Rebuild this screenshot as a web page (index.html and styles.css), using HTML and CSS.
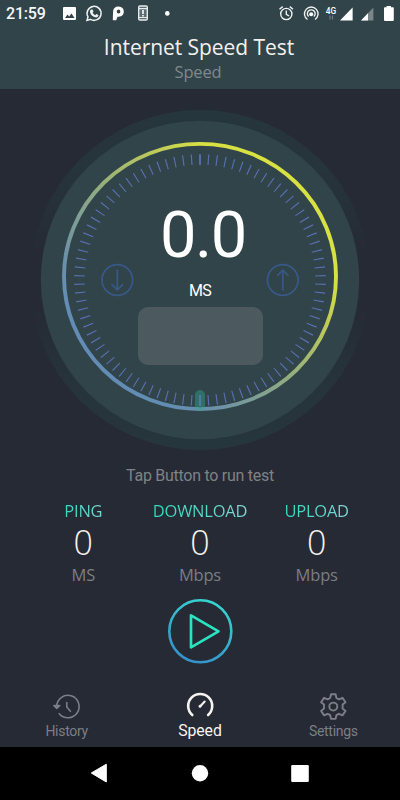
FILE: index.html
```html
<!DOCTYPE html>
<html lang="en">
<head>
<meta charset="UTF-8">
<meta name="viewport" content="width=device-width, initial-scale=1.0">
<title>Internet Speed Test</title>
<link rel="stylesheet" href="styles.css">
</head>
<body>
<div class="screen">
    <header class="header">
        <!-- Status bar -->
        <div class="status">
            <span class="time">21:59</span>
            <svg class="status-left" width="110" height="20" viewBox="61 4 110 20">
                <path fill="#fff" fill-rule="evenodd" d="M64 7h11q1 0 1 1v11q0 1-1 1H64q-1 0-1-1V8q0-1 1-1zM65 18h9.500l-3-4.500-2.400 3-1.600-2z"/>
                <path fill="none" stroke="#eef1f2" stroke-width="1.500" d="M87 20.500l1-3.700a7 7 0 1 1 2.600 2.600z"/>
                <path fill="#eef1f2" d="M91.300 9.500h1.300l.9 2-.9 1.200q1 1.800 2.700 2.600l1-1.200 2.200 1q0 2.400-2.400 2.400-5.400-.8-6.300-6.200.4-1.200 1.500-1.800z"/>
                <path fill="#fff" fill-rule="evenodd" d="M113 12q.3-5.500 5.500-5.500 5.300.3 5.300 5.300-.2 4.600-5 4.900h-1.300l-1.300 3.500h-3.400zM118.600 9.600q-1.900.2-1.900 2.100.2 1.700 1.800 1.700 1.900-.2 1.900-2-.2-1.700-1.800-1.800z"/>
                <rect x="138.700" y="6" width="8.600" height="14" rx="1.200" fill="#5d6c70" stroke="#e6eaeb" stroke-width="1.400"/>
                <path stroke="#e6eaeb" stroke-width="1.200" d="M138.500 8.600h9M138.500 17.500h9"/>
                <path stroke="#fff" stroke-width="1.600" d="M143 10v4M143 15v1.500"/>
                <circle cx="167.300" cy="13.400" r="2.300" fill="#fff"/>
            </svg>
            <svg class="status-right" width="120" height="20" viewBox="277 4 120 20">
                <g fill="none" stroke="#eef1f2" stroke-width="1.400">
                    <circle cx="286.300" cy="14" r="5.600"/>
                    <path d="M286.300 10.500v3.800l2.800 1.700M279.500 9.300l3.200-2.700M293 9.300l-3.200-2.700"/>
                    <path d="M307.500 19.500a6.800 6.800 0 1 1 7.500 0M308.600 16.600a3.900 3.900 0 1 1 5.300 0"/>
                </g>
                <circle cx="311.200" cy="14.300" r="2" fill="#fff"/>
                <text class="net" x="325.800" y="14" textLength="10.400" lengthAdjust="spacingAndGlyphs">4G</text>
                <path stroke="#71797d" stroke-width="1.200" d="M330 15.500v4M332.500 15.500v4"/>
                <path fill="#fff" d="M352.600 7.500V20.500H340z"/>
                <path fill="#7b8589" d="M373.400 7.500V20.500H361z"/>
                <path fill="#fff" d="M368 13.200v7.300h-7z"/>
                <path fill="#fff" d="M386.500 6h4.500v1.300h2q.8 0 .8.800v12q0 .8-.8.800h-8.200q-.8 0-.8-.8v-12q0-.8.8-.8h1.700z"/>
            </svg>
        </div>
        <h1>Internet Speed Test</h1>
        <p class="sub">Speed</p>
    </header>

    <!-- Gauge -->
    <div class="gauge">
        <svg class="dial" width="344" height="344" viewBox="28 108 344 344">
            <defs>
                <linearGradient id="halo" x1="0" y1="0" x2="0" y2="1">
                    <stop offset="0" stop-color="#26363d"/>
                    <stop offset=".22" stop-color="#26333b"/>
                    <stop offset=".42" stop-color="#262a35"/>
                    <stop offset=".58" stop-color="#262a35"/>
                    <stop offset=".78" stop-color="#26333b"/>
                    <stop offset="1" stop-color="#26363d"/>
                </linearGradient>
                <linearGradient id="ring" gradientUnits="userSpaceOnUse" x1="110" y1="350" x2="260" y2="200">
                    <stop offset="0" stop-color="#628cb3"/>
                    <stop offset=".16" stop-color="#6c91a8"/>
                    <stop offset=".5" stop-color="#91ac80"/>
                    <stop offset=".82" stop-color="#bfcc58"/>
                    <stop offset="1" stop-color="#d8e142"/>
                </linearGradient>
            </defs>
            <circle cx="200" cy="280" r="170" fill="url(#halo)"/>
            <circle cx="200" cy="280" r="159.200" fill="#31444a"/>
            <ellipse cx="200" cy="276.500" rx="136" ry="132.600" fill="none" stroke="url(#ring)" stroke-width="3.900"/>
            <!-- one tick every 4 degrees -->
            <circle cx="200" cy="280" r="120.500" fill="none" stroke="#5870b2" stroke-width="10.600" pathLength="360" stroke-dasharray=".54 3.460" stroke-dashoffset=".27" transform="rotate(-90 200 280)"/>
            <rect x="195" y="390" width="10" height="21" rx="5" fill="#30a68c" fill-opacity=".45"/>
            <path stroke="#5579b4" stroke-width="1.500" d="M200 395v11"/>
            <path stroke="#5870b2" stroke-width="1.500" d="M200 154.500v10.500"/>
            <g fill="none" stroke="#385987" stroke-width="1.700" stroke-linecap="round" stroke-linejoin="round">
                <circle cx="117.300" cy="280" r="15.300"/>
                <path d="M117.300 270v19.500M112 284.700l5.300 5.300 5.300-5.300"/>
                <circle cx="282.800" cy="280" r="15.300"/>
                <path d="M282.800 290v-19.500M277.500 275.500l5.300-5.300 5.300 5.300"/>
            </g>
        </svg>
        <div class="reading">
            <span class="value">0.0</span>
            <span class="unit">MS</span>
            <div class="panel"></div>
        </div>
    </div>

    <p class="hint">Tap Button to run test</p>

    <!-- Results -->
    <div class="results">
        <div class="result">
            <span class="name">PING</span>
            <span class="num">0</span>
            <span class="measure">MS</span>
        </div>
        <div class="result">
            <span class="name">DOWNLOAD</span>
            <span class="num">0</span>
            <span class="measure">Mbps</span>
        </div>
        <div class="result">
            <span class="name">UPLOAD</span>
            <span class="num">0</span>
            <span class="measure">Mbps</span>
        </div>
    </div>

    <button class="play" aria-label="Start">
        <svg width="66" height="66" viewBox="167 598 66 66">
            <defs>
                <linearGradient id="play" x1="0.300" y1="1" x2="0.700" y2="0">
                    <stop offset="0" stop-color="#3492ca"/>
                    <stop offset=".3" stop-color="#36a2cc"/>
                    <stop offset="1" stop-color="#36d6cf"/>
                </linearGradient>
            </defs>
            <circle cx="200.300" cy="631.300" r="31" fill="none" stroke="url(#play)" stroke-width="2.600"/>
            <path d="M191 615.300v32l27.500-16z" fill="none" stroke="#2ae3c0" stroke-width="2.700" stroke-linejoin="round"/>
        </svg>
    </button>

    <!-- Tabs -->
    <nav class="tabs">
        <a class="tab">
            <svg width="30" height="30" viewBox="52.600 692 30 30" fill="none" stroke="#7b7e86" stroke-width="1.600" stroke-linecap="round" stroke-linejoin="round">
                <path d="M57.300 706.500a11.200 11.200 0 1 1 2.600 7.200"/>
                <path d="M67.400 702.500v4.500l3.600 4.200"/>
                <path d="M54.500 705.600h5.800l-2.900 2.800z" fill="#7b7e86"/>
            </svg>
            <span>History</span>
        </a>
        <a class="tab active">
            <svg width="30" height="30" viewBox="185 692 30 30" fill="none" stroke="#f6f4f0" stroke-width="2.600" stroke-linecap="round">
                <path d="M192.300 715a12 12 0 1 1 15.800 0"/>
                <path d="M200.500 706l4.200-4.500" stroke-width="2"/>
                <circle cx="200" cy="706.300" r=".8" stroke-width="1.400"/>
            </svg>
            <span>Speed</span>
        </a>
        <a class="tab">
            <svg width="30" height="30" viewBox="318 692 30 30" fill="none" stroke="#7b7e86" stroke-width="1.900" stroke-linejoin="round">
                <circle cx="333.300" cy="706.600" r="4"/>
                <path d="M331 694.300h4.600l.8 3.700 2.500 1.400 3.600-1.600 3 4.500-2.900 2.300v4l2.900 2.300-3 4.500-3.600-1.600-2.500 1.400-.8 3.700H331l-.8-3.700-2.500-1.400-3.600 1.600-3-4.500 2.900-2.300v-4l-2.900-2.300 3-4.500 3.600 1.600 2.500-1.400z"/>
            </svg>
            <span>Settings</span>
        </a>
    </nav>

    <!-- System navigation -->
    <div class="sysnav">
        <svg width="220" height="22" viewBox="90 762 220 22" fill="#fff">
            <path d="M91.300 773l15-8.800v17.800z" stroke="#fff" stroke-linejoin="round"/>
            <circle cx="200" cy="773.300" r="8.200"/>
            <rect x="291.200" y="765" width="17.600" height="17" rx="1.200"/>
        </svg>
    </div>
</div>
</body>
</html>
```
FILE: styles.css
```css
* {box-sizing:border-box;}
body {margin:0;background:#262a35;font-family:Roboto,"Liberation Sans",sans-serif;color:#fff;}
h1,p {margin:0;font-weight:400;}
svg {display:block;}
.screen {width:400px;height:800px;display:flex;flex-direction:column;align-items:center;overflow:hidden;}
.header {width:100%;height:89px;background:#31444a;text-align:center;}
.status {height:28px;padding:0 3px 0 6px;display:flex;align-items:center;}
.time {width:55px;text-align:left;font-size:16px;font-weight:500;line-height:28px;letter-spacing:-.2px;color:#f6f8f8;}
.status-right {margin-left:auto;}
.net {font-size:9px;font-weight:500;fill:#fff;}
h1 {font-family:"Open Sans","Noto Sans",sans-serif;font-size:21px;line-height:28px;letter-spacing:-.05px;margin-top:5px;padding-right:2px;color:#f3f1ee;}
.sub {font-family:"Open Sans","Noto Sans",sans-serif;font-size:16.500px;line-height:22px;letter-spacing:-.2px;padding-right:4px;color:#7f898d;}
.gauge {display:grid;justify-items:center;margin-top:19px;width:344px;height:344px;}
.dial,.reading {grid-area:1/1;}
.reading {display:flex;flex-direction:column;align-items:center;padding-top:89px;}
.value {font-size:65px;line-height:76px;letter-spacing:-1.400px;margin-left:6px;}
.unit {font-size:16px;line-height:20px;margin-top:8px;letter-spacing:-.8px;}
.panel {width:125px;height:58px;margin-top:6px;border-radius:10px;background:#4c5a60;}
.hint {font-size:16px;line-height:22px;letter-spacing:-.27px;margin-top:13px;color:#7f8286;}
.results {width:350px;display:grid;grid-template-columns:repeat(3,1fr);margin-top:13px;font-family:"Open Sans","Noto Sans",sans-serif;}
.result {display:flex;flex-direction:column;align-items:center;}
.name {font-size:16.500px;line-height:22px;letter-spacing:-.25px;background:linear-gradient(90deg,#32d9bd,#80d5d3);background-clip:text;-webkit-background-clip:text;color:transparent;}
.num {font-size:34px;font-weight:300;line-height:41px;color:#f6f2eb;}
.measure {font-size:16.500px;line-height:22px;letter-spacing:-.2px;margin-top:1px;color:#7b7e82;}
.play {margin:12px 0 0;padding:0;border:none;background:none;cursor:pointer;}
.tabs {width:100%;margin-top:auto;height:55px;display:grid;grid-template-columns:repeat(3,1fr);}
.tab {display:flex;flex-direction:column;align-items:center;font-size:14px;letter-spacing:-.3px;color:#7b7e86;}
.tab span {line-height:18px;}
.tab.active {color:#f6f4f0;font-size:15.800px;letter-spacing:-.1px;}
.sysnav {width:100%;height:53px;background:#000;display:flex;justify-content:center;padding-top:15px;}
```
